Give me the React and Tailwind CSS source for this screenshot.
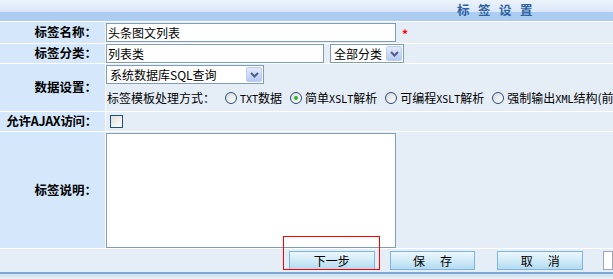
import React from 'react'

const font = { fontFamily: '"Noto Sans CJK SC", "Liberation Sans", sans-serif' }

// Latin runs inside the SimSun-style text are 6px per letter
function L({ children }) {
  return <span className="font-['DejaVu_Sans_Mono',monospace] text-[10px]">{children}</span>
}

function Label({ children }) {
  return (
    <div className="flex w-[106px] shrink-0 items-center justify-end whitespace-nowrap border-r border-white bg-[#d4e7fb] pr-[8px] text-[12.5px] font-bold text-black">
      {children}
    </div>
  )
}

function Chevron() {
  return (
    <div className="flex h-full w-[16px] items-center justify-center rounded-[2px] border border-[#b9cdf2] bg-gradient-to-b from-[#e3ebff] to-[#b7c9f3]">
      <svg width="9" height="6" viewBox="0 0 9 6">
        <path d="M1 1 L4.5 4.5 L8 1" fill="none" stroke="#4d6185" strokeWidth="2" />
      </svg>
    </div>
  )
}

function Select({ children, className }) {
  return (
    <div className={`flex items-center justify-between border border-[#7f9db9] bg-white pl-[3px] pr-px py-px text-[12px] ${className}`}>
      <span className="leading-none">{children}</span>
      <Chevron />
    </div>
  )
}

function Radio({ checked, children, className = 'ml-[8px]' }) {
  return (
    <span className={`inline-flex items-center gap-[3px] ${className}`}>
      <span className="flex h-[12px] w-[12px] items-center justify-center rounded-full border border-[#2b4e7c] bg-gradient-to-br from-[#d8dcdf] to-white">
        {checked && <span className="h-[4px] w-[4px] rounded-full bg-[#2bb52b]" />}
      </span>
      <span>{children}</span>
    </span>
  )
}

function Button({ children, className = '' }) {
  return (
    <button
      type="button"
      className={`flex h-[19px] w-[88px] items-center justify-center border border-[#7fb3e0] bg-gradient-to-b from-[#ecf8fd] to-[#b4dcf1] text-[12px] leading-none text-black ${className}`}
    >
      {children}
    </button>
  )
}

export default function App() {
  return (
    <div className="h-[279px] w-[613px] overflow-hidden bg-[#e5edf7]" style={font}>
      <div className="relative h-[22px] border-b border-white">
        <div className="h-[12px] bg-gradient-to-b from-[#edf3fb] to-[#d9e7f7]" />
        <div className="h-[9px] bg-[#acccf1]" />
        <div className="absolute left-[457px] top-[1px] whitespace-nowrap text-[12.5px] font-bold tracking-[8.5px] text-[#2f62a3]">
          标签设置
        </div>
      </div>

      <div className="flex h-[22px] border-b border-white">
        <Label>标签名称：</Label>
        <div className="flex flex-1 items-center">
          <div className="flex h-[19px] w-[290px] items-center border border-[#7f9db9] bg-white pl-px text-[12px]">
            头条图文列表
          </div>
          <span className="ml-[6px] mt-[2px] text-[12px] font-bold text-[#ff0000]">*</span>
        </div>
      </div>

      <div className="flex h-[20px] border-b border-white">
        <Label>标签分类：</Label>
        <div className="flex flex-1 items-center">
          <div className="flex h-[19px] w-[218px] items-center border border-[#7f9db9] bg-white pl-px text-[12px]">
            列表类
          </div>
          <Select className="ml-[6px] h-[19px] w-[74px]">全部分类</Select>
        </div>
      </div>

      <div className="flex h-[48px] border-b border-white">
        <Label>数据设置：</Label>
        <div className="flex flex-1 flex-col overflow-hidden pt-px text-[12px]">
          <Select className="h-[19px] w-[158px]">系统数据库SQL查询</Select>
          <div className="mt-[5px] flex items-center whitespace-nowrap pl-px">
            <span>标签模板处理方式：</span>
            <Radio className="ml-[10px]">
              <L>TXT</L>数据
            </Radio>
            <Radio checked>
              简单<L>XSLT</L>解析
            </Radio>
            <Radio>
              可编程<L>XSLT</L>解析
            </Radio>
            <Radio>
              强制输出<L>XML</L>结构(前端
            </Radio>
          </div>
        </div>
      </div>

      <div className="flex h-[20px] border-b border-white">
        <div className="flex w-[106px] shrink-0 items-center justify-end whitespace-nowrap border-r border-white bg-[#d4e7fb] pr-[8px] text-[12.5px] font-bold tracking-[-0.3px]">
          允许AJAX访问：
        </div>
        <div className="flex flex-1 items-center pl-[4px]">
          <div className="h-[13px] w-[13px] border border-[#1c5180] bg-gradient-to-br from-[#dcdcd7] to-white" />
        </div>
      </div>

      <div className="flex h-[117px] border-b border-white">
        <Label>标签说明：</Label>
        <div className="flex flex-1 items-start pt-px">
          <div className="h-[115px] w-[290px] border border-[#7f9db9] bg-white" />
        </div>
      </div>

      <div className="relative flex h-[25px] items-center border-b-2 border-[#7ea6d8] pl-[289px]">
        <Button>下一步</Button>
        <Button className="ml-[15px]">
          保<span className="inline-block w-[15px]" />存
        </Button>
        <Button className="ml-[22px]">
          取<span className="inline-block w-[15px]" />消
        </Button>
        <div className="ml-[20px] h-[19px] w-[10px] shrink-0 border border-[#9aa7b5] bg-white" />
        <div className="absolute left-[283px] top-[-13px] h-[34px] w-[97px] border border-[#ff0000]" />
      </div>
      <div className="h-[3px] bg-[#d5e3f3]" />
    </div>
  )
}
